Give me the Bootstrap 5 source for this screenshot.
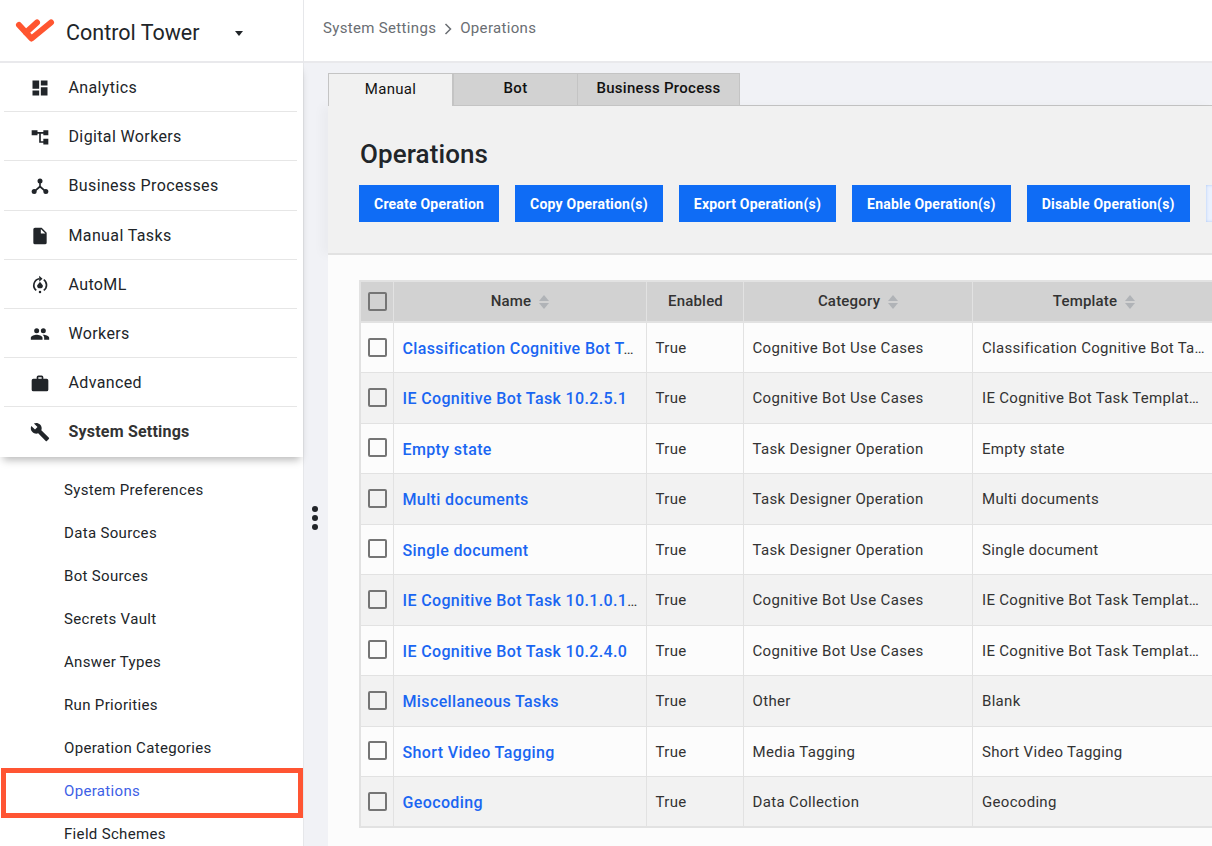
<!DOCTYPE html>
<html lang="en">
<head>
  <meta charset="UTF-8">
  <title>Control Tower - Operations</title>
  <link href="https://cdn.jsdelivr.net/npm/bootstrap@5.3.0/dist/css/bootstrap.min.css" rel="stylesheet">
  <style>
    html, body { height: 100%; overflow: hidden; }
    body { font-family: Roboto, "Liberation Sans", sans-serif; color: #212529; background: #f1f2f6; }
    .app-shell { width: 1212px; height: 846px; overflow: hidden; }
    .side-bar { width: 304px; flex: none; background: #fff; border-right: 1px solid #e6e7ea; position: relative; }
    .brand-row { height: 63px; flex: none; border-bottom: 2px solid #e9e9ec; padding: 2px 0 0 14px; }
    .brand-name { font-size: 21.5px; margin-left: 10px; padding-top: 4px; width: 169px; color: #212529; }
    .caret-down { border-left: 4.5px solid transparent; border-right: 4.5px solid transparent; border-top: 5px solid #212529; margin-top: 4px; }
    .main-nav { flex: none; width: 303px; padding: 0 6px 0 4px; background: #fff; box-shadow: 0 6px 8px -3px rgba(0,0,0,.28); position: relative; }
    .main-item { height: 49.2px; padding-top: 2px; border-bottom: 1px solid #e6e6e6; font-size: 16px; letter-spacing: .37px; color: #212529; }
    .main-item:last-child { border-bottom: 0; }
    .main-item.is-open { padding-top: 1px; font-weight: 700; color: #333; letter-spacing: .2px; }
    .nav-ico { width: 20px; height: 20px; margin-left: 26px; margin-right: 18.5px; flex: none; fill: #212529; }
    .sub-nav { padding-top: 12px; }
    .sub-item { height: 43px; flex: none; padding-left: 64px; font-size: 15px; letter-spacing: .33px; color: #212529; position: relative; }
    .sub-item.is-active { color: #3d5fe6; }
    .sub-item.is-active::after { content: ""; position: absolute; left: 1px; right: 0; top: -2px; bottom: -5px; border: 5px solid #ff5533; }
    .drag-dots { position: absolute; left: 308px; top: 506px; width: 14px; }
    .drag-dots span { display: block; width: 6px; height: 6px; background: #212529; border-radius: 50%; margin: 0 auto 3px; }
    .top-strip { height: 63px; flex: none; background: #fff; border-bottom: 2px solid #e9e9ec; padding: 0 0 4px 19px; font-size: 15px; letter-spacing: .33px; color: #6a6e73; }
    .crumb-sep { margin: 0 8px; }
    .work-area { padding: 10px 0 0 24px; flex: 1; min-width: 0; overflow: hidden; }
    .tab-strip { height: 33px; border-bottom: 1px solid #c4c4c4; }
    .tab-btn { width: 124px; height: 33px; padding: 0 0 2px; font-size: 15px; letter-spacing: .3px; font-weight: 500; color: #111; background: #d2d2d2; border: 1px solid #c4c4c4; border-left-width: 0; }
    .tab-btn.is-current { width: 126px; background: #f1f1f1; border-left-width: 1px; border-right-width: 2px; border-bottom: 0; font-weight: 400; }
    .tab-btn.is-wide { width: 162px; }
    .panel-top { background: #f1f1f1; height: 149px; padding: 32px 0 0 31px; border-bottom: 2px solid #e2e2e2; box-shadow: -6px 0 10px rgba(0,0,0,.03); }
    .panel-title { font-size: 26px; font-weight: 500; letter-spacing: .1px; line-height: 32px; margin: 0 0 15px 1px; color: #212529; }
    .action-btn { height: 37px; padding: 2px 15px 0; border-radius: 0; border: 0; background: #0f6cf5; color: #fff; font-size: 14px; letter-spacing: .215px; font-weight: 700; white-space: nowrap; flex: none; }
    .action-btn.is-faded { background: #eaf1fe; box-shadow: inset 0 0 3px #a9c6f8; width: 80px; }
    .panel-body { background: #fcfcfc; padding: 25px 0 0 31px; height: 600px; }
    .ops-table { table-layout: fixed; width: 1099px; border-collapse: collapse; border: 2px solid #e2e2e2; margin: 0; --bs-table-bg: transparent; font-size: 15px; letter-spacing: .35px; }
    .ops-table th { background: #d2d2d2; height: 41px; text-align: center; font-size: 15px; letter-spacing: .2px; font-weight: 500; color: #333; border: 1px solid #e2e2e2; border-bottom-width: 2px; padding: 0 8px 0 10px; vertical-align: middle; }
    .ops-table td { height: 50.5px; padding: 1px 9px 0; border: 1px solid #e2e2e2; color: #333; vertical-align: middle; white-space: nowrap; overflow: hidden; text-overflow: ellipsis; }
    .ops-table td.name-cell { padding: 3px 7px 0 9px; }
    .ops-table td.tpl-cell { padding-left: 9.5px; letter-spacing: .3px; }
    .ops-table tbody tr:nth-child(even) td { background: #f2f2f2; }
    .ops-table tbody tr:nth-child(odd) td { background: #fcfcfc; }
    .ops-table td a { color: #1a66f2; font-size: 16px; font-weight: 500; letter-spacing: .37px; text-decoration: none; }
    .tick-box { display: block; width: 19px; height: 19px; border: 2px solid #757575; border-radius: 2px; position: relative; top: -1px; left: -2px; }
    .ops-table th .tick-box { top: 0; left: -3px; }
    .sort-arrows { display: inline-block; vertical-align: middle; margin-left: 4px; width: 11px; }
    .sort-arrows i { display: block; width: 0; border-left: 5.5px solid transparent; border-right: 5.5px solid transparent; }
    .sort-arrows i:first-child { border-bottom: 6px solid #b0b3b7; margin-bottom: 2px; }
    .sort-arrows i:last-child { border-top: 6px solid #b0b3b7; }
  </style>
</head>
<body>
  <div class="app-shell d-flex">
    <aside class="side-bar d-flex flex-column">
      <div class="brand-row d-flex align-items-center">
        <svg width="42" height="30" viewBox="14 15 42 30"><g fill="none" stroke="#ff5530" stroke-width="6" stroke-linecap="round" stroke-linejoin="round"><path d="M19 23 L31.500 36.500 L51 20.500"/><path d="M26 30.500 L37 20.500"/></g></svg>
        <span class="brand-name">Control Tower</span>
        <span class="caret-down"></span>
      </div>
      <nav class="main-nav">
        <div class="main-item d-flex align-items-center"><svg class="nav-ico" viewBox="0 0 24 24"><path d="M3 3h8v10H3zM13 3h8v6h-8zM13 11h8v10h-8zM3 15h8v6H3z"/></svg>Analytics</div>
        <div class="main-item d-flex align-items-center"><svg class="nav-ico" viewBox="0 0 24 24"><path d="M2 4h7v6H2zM16 4h6v6h-6zM16 14h6v7h-6zM9 6h7v2h-3v9h3v2h-5V8H9z"/></svg>Digital Workers</div>
        <div class="main-item d-flex align-items-center"><svg class="nav-ico" viewBox="0 0 24 24"><circle cx="12" cy="6" r="3"/><circle cx="5" cy="18.500" r="3"/><circle cx="19" cy="18.500" r="3"/><path d="M11 6h2v6l6 5.500-1.400 1.500L12 14l-5.600 5L5 17.500l6-5.500z"/></svg>Business Processes</div>
        <div class="main-item d-flex align-items-center"><svg class="nav-ico" viewBox="0 0 24 24"><path d="M14 2H6a2 2 0 0 0-2 2v16a2 2 0 0 0 2 2h12a2 2 0 0 0 2-2V8zm-1 7V3.500L18.500 9z"/></svg>Manual Tasks</div>
        <div class="main-item d-flex align-items-center"><svg class="nav-ico" viewBox="0 0 24 24"><path d="M7.500 18.500A8 8 0 0 1 11 4.500M16.500 18.500A8 8 0 0 0 16.500 5.500" fill="none" stroke="#212529" stroke-width="2"/><path d="M11 1l4 3.500L11 8z"/><path d="M12 8l3.500 4.500a3.500 3.500 0 1 1-7 0z"/><circle cx="12" cy="20.500" r="1.500"/></svg>AutoML</div>
        <div class="main-item d-flex align-items-center"><svg class="nav-ico" viewBox="0 0 24 24"><path d="M16 11a3 3 0 1 0 0-6 3 3 0 0 0 0 6zm-8 0a3 3 0 1 0 0-6 3 3 0 0 0 0 6zm0 2c-2.300 0-7 1.200-7 3.500V19h14v-2.500C15 14.200 10.300 13 8 13zm8 0h-1c1.200.8 2 2 2 3.500V19h6v-2.500c0-2.300-4.700-3.500-7-3.500z"/></svg>Workers</div>
        <div class="main-item d-flex align-items-center"><svg class="nav-ico" viewBox="0 0 24 24"><path d="M20 7h-4V5a2 2 0 0 0-2-2h-4a2 2 0 0 0-2 2v2H4a2 2 0 0 0-2 2v11a2 2 0 0 0 2 2h16a2 2 0 0 0 2-2V9a2 2 0 0 0-2-2zm-6 0h-4V5h4z"/></svg>Advanced</div>
        <div class="main-item is-open d-flex align-items-center"><svg class="nav-ico" viewBox="0 0 24 24"><path d="M22.700 19l-9.100-9.100c.9-2.300.4-5-1.500-6.900-2-2-5-2.400-7.400-1.300L9 6 6 9 1.600 4.700C.4 7.100.9 10.100 2.900 12.100c1.900 1.900 4.600 2.400 6.900 1.500l9.100 9.100c.4.400 1 .4 1.400 0l2.300-2.300c.5-.4.5-1.100.1-1.400z"/></svg>System Settings</div>
      </nav>
      <div class="sub-nav">
        <div class="sub-item d-flex align-items-center">System Preferences</div>
        <div class="sub-item d-flex align-items-center">Data Sources</div>
        <div class="sub-item d-flex align-items-center">Bot Sources</div>
        <div class="sub-item d-flex align-items-center">Secrets Vault</div>
        <div class="sub-item d-flex align-items-center">Answer Types</div>
        <div class="sub-item d-flex align-items-center">Run Priorities</div>
        <div class="sub-item d-flex align-items-center">Operation Categories</div>
        <div class="sub-item is-active d-flex align-items-center">Operations</div>
        <div class="sub-item d-flex align-items-center">Field Schemes</div>
      </div>
      <div class="drag-dots"><span></span><span></span><span></span></div>
    </aside>
    <main class="flex-grow-1 d-flex flex-column" style="min-width:0">
      <div class="top-strip d-flex align-items-center">
        <span>System Settings</span>
        <svg class="crumb-sep" width="8" height="12" viewBox="0 0 8 12"><path d="M1.500 1l5 5-5 5" fill="none" stroke="#6a6e73" stroke-width="1.500"/></svg>
        <span>Operations</span>
      </div>
      <div class="work-area">
        <div class="tab-strip d-flex">
          <button class="tab-btn is-current">Manual</button>
          <button class="tab-btn">Bot</button>
          <button class="tab-btn is-wide">Business Process</button>
        </div>
        <div class="panel-top">
          <h1 class="panel-title">Operations</h1>
          <div class="d-flex gap-3">
            <button class="action-btn">Create Operation</button>
            <button class="action-btn">Copy Operation(s)</button>
            <button class="action-btn">Export Operation(s)</button>
            <button class="action-btn">Enable Operation(s)</button>
            <button class="action-btn">Disable Operation(s)</button>
            <button class="action-btn is-faded"></button>
          </div>
        </div>
        <div class="panel-body">
          <table class="table ops-table">
            <colgroup><col style="width:33px"><col style="width:253px"><col style="width:97px"><col style="width:229px"><col style="width:243px"><col style="width:244px"></colgroup>
            <thead>
              <tr>
                <th><span class="tick-box"></span></th>
                <th>Name <span class="sort-arrows"><i></i><i></i></span></th>
                <th>Enabled</th>
                <th>Category <span class="sort-arrows"><i></i><i></i></span></th>
                <th>Template <span class="sort-arrows"><i></i><i></i></span></th>
                <th></th>
              </tr>
            </thead>
            <tbody id="ops-rows"></tbody>
          </table>
        </div>
      </div>
    </main>
  </div>
  <script src="https://cdn.jsdelivr.net/npm/bootstrap@5.3.0/dist/js/bootstrap.bundle.min.js"></script>
  <script>
    const rows = [
      ["Classification Cognitive Bot Task Template", "Cognitive Bot Use Cases", "Classification Cognitive Bot Task Template"],
      ["IE Cognitive Bot Task 10.2.5.1", "Cognitive Bot Use Cases", "IE Cognitive Bot Task Template 10.2.5.1"],
      ["Empty state", "Task Designer Operation", "Empty state"],
      ["Multi documents", "Task Designer Operation", "Multi documents"],
      ["Single document", "Task Designer Operation", "Single document"],
      ["IE Cognitive Bot Task 10.1.0.1 (2)", "Cognitive Bot Use Cases", "IE Cognitive Bot Task Template 10.1.0.1"],
      ["IE Cognitive Bot Task 10.2.4.0", "Cognitive Bot Use Cases", "IE Cognitive Bot Task Template 10.2.4.0"],
      ["Miscellaneous Tasks", "Other", "Blank"],
      ["Short Video Tagging", "Media Tagging", "Short Video Tagging"],
      ["Geocoding", "Data Collection", "Geocoding"]
    ];
    document.getElementById('ops-rows').innerHTML = rows.map(r => `
      <tr>
        <td><span class="tick-box"></span></td>
        <td class="name-cell"><a href="#">${r[0]}</a></td>
        <td>True</td>
        <td>${r[1]}</td>
        <td class="tpl-cell">${r[2]}</td>
        <td></td>
      </tr>`).join('');
  </script>
</body>
</html>
